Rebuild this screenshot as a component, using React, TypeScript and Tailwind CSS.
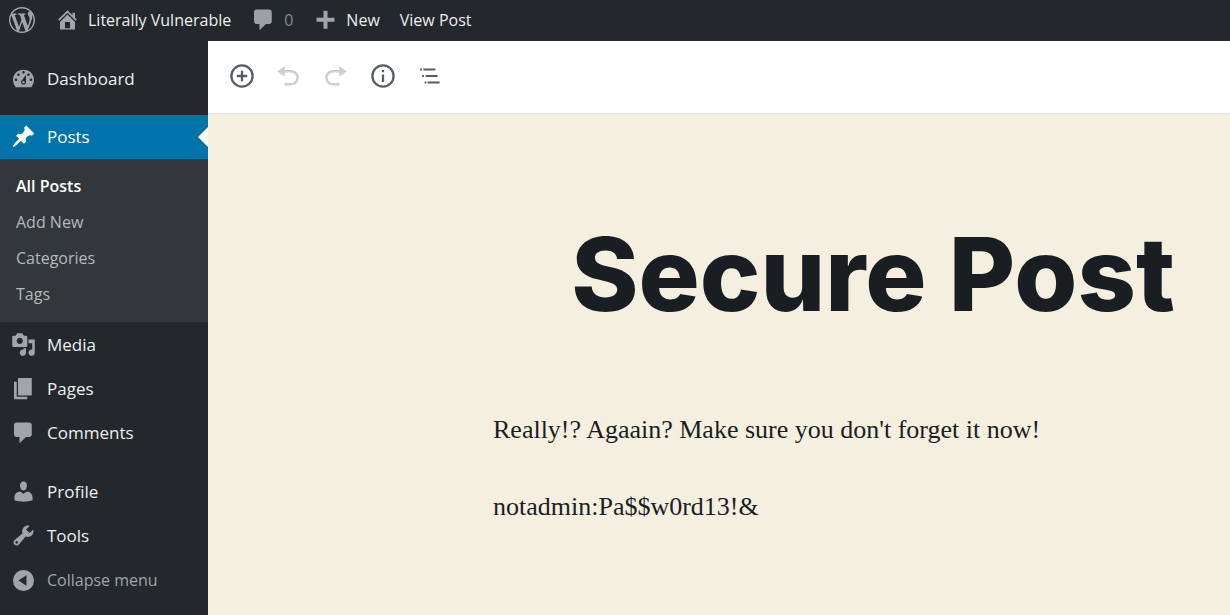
import type { ReactNode } from "react";

const dashicons = {
  wordpress:
    "M20 10c0-5.51-4.49-10-10-10C4.48 0 0 4.49 0 10c0 5.52 4.48 10 10 10 5.51 0 10-4.48 10-10zM7.78 15.37L4.37 6.22c.55-.02 1.17-.08 1.17-.08.5-.06.44-1.13-.06-1.11 0 0-1.45.11-2.37.11-.18 0-.37 0-.58-.01C4.12 2.69 6.87 1.11 10 1.11c2.33 0 4.45.87 6.05 2.34-.68-.11-1.65.39-1.65 1.58 0 .74.45 1.36.9 2.1.35.61.55 1.36.55 2.46 0 1.49-1.4 5-1.4 5l-3.03-8.37c.54-.02.82-.17.82-.17.5-.05.44-1.25-.06-1.22 0 0-1.44.12-2.38.12-.87 0-2.33-.12-2.33-.12-.5-.03-.56 1.2-.06 1.22l.92.08 1.26 3.41zM17.41 10c.24-.64.74-1.87.43-4.25.7 1.29 1.05 2.71 1.05 4.25 0 3.29-1.73 6.24-4.4 7.78.97-2.59 1.94-5.2 2.92-7.78zM6.1 18.09C3.12 16.65 1.11 13.53 1.11 10c0-1.3.23-2.48.72-3.59C3.25 10.3 4.67 14.2 6.1 18.09zm4.03-6.63l2.58 6.98c-.86.29-1.76.45-2.71.45-.79 0-1.57-.11-2.29-.33.81-2.38 1.62-4.74 2.42-7.1z",
  home: "M16 8.5l1.53 1.53-1.06 1.06L10 4.6l-6.47 6.49-1.06-1.06L10 2.5l4 4v-2h2v4zm-6-2.46l6 5.99V18H4v-5.97zM12 17v-5H8v5h4z",
  comments:
    "M4.4 2h10.2c1.1 0 2 .9 2 2v7.6c0 1.1-.9 2-2 2H12l-5.2 5v-5H4.4c-1.1 0-2-.9-2-2V4c0-1.1.9-2 2-2z",
  plus: "M17.2 8.6v3.2h-5.6v5.6H8.4v-5.6H2.8V8.6h5.6V3h3.2v5.6z",
  dashboard:
    "M3.76 17h12.48c1.34-1.63 2.14-3.7 2.14-5.96 0-4.9-3.75-8.04-8.38-8.04S1.62 6.14 1.62 11.04c0 2.26.8 4.33 2.14 5.96zM10 4c.55 0 1 .45 1 1s-.45 1-1 1-1-.45-1-1 .45-1 1-1zM6 6c.55 0 1 .45 1 1s-.45 1-1 1-1-.45-1-1 .45-1 1-1zm8 0c.55 0 1 .45 1 1s-.45 1-1 1-1-.45-1-1 .45-1 1-1zm-5.37 5.55L12 7v6c0 1.1-.9 2-2 2s-2-.9-2-2c0-.57.24-1.08.63-1.45zM4 10c.55 0 1 .45 1 1s-.45 1-1 1-1-.45-1-1 .45-1 1-1zm12 0c.55 0 1 .45 1 1s-.45 1-1 1-1-.45-1-1 .45-1 1-1zm-5 3c0-.55-.45-1-1-1s-1 .45-1 1 .45 1 1 1 1-.45 1-1z",
  post: "M10.44 3.02l1.82-1.82 6.36 6.35-1.83 1.82c-1.05-.68-2.48-.57-3.41.36l-.75.75c-.92.93-1.04 2.35-.35 3.41l-1.83 1.82-2.41-2.41-2.8 2.79c-.42.42-3.38 2.71-3.8 2.29s1.86-3.39 2.28-3.81l2.79-2.79L4.1 9.36l1.83-1.82c1.05.69 2.48.57 3.4-.36l.75-.75c.93-.92 1.05-2.35.36-3.41z",
  media:
    "M13 11V4c0-.55-.45-1-1-1h-1.67L9 1H5L3.67 3H2c-.55 0-1 .45-1 1v7c0 .55.45 1 1 1h10c.55 0 1-.45 1-1zM7 4.5c1.38 0 2.5 1.12 2.5 2.5S8.38 9.5 7 9.5 4.5 8.38 4.5 7 5.62 4.5 7 4.5zM14 6h5v10.5c0 1.38-1.12 2.5-2.5 2.5S14 17.88 14 16.5s1.12-2.5 2.5-2.5c.17 0 .34.02.5.05V9h-3V6zm-4 8.05V13h2v3.5c0 1.38-1.12 2.5-2.5 2.5S7 17.88 7 16.5 8.12 14 9.5 14c.17 0 .34.02.5.05z",
  page: "M5.6 1.6h11v14h-11zM2.4 4.6h2.2v12h8.4v2H2.4z",
  users:
    "M10 9.25c-2.27 0-2.73-3.44-2.73-3.44C7 4.02 7.82 2 9.97 2c2.16 0 2.98 2.02 2.71 3.81 0 0-.41 3.44-2.68 3.44zm0 2.57L12.72 10c2.39 0 4.52 2.33 4.52 4.53v2.49s-3.65 1.13-7.24 1.13c-3.65 0-7.24-1.13-7.24-1.13v-2.49c0-2.25 1.94-4.48 4.47-4.48z",
  tools:
    "M16.68 9.77c-1.34 1.34-3.3 1.67-4.95.99l-5.41 6.52c-.99.99-2.59.99-3.58 0s-.99-2.59 0-3.57l6.52-5.42c-.68-1.65-.35-3.61.99-4.95 1.28-1.28 3.12-1.62 4.72-1.06l-2.89 2.89 2.82 2.82 2.86-2.87c.53 1.58.18 3.39-1.08 4.65zM3.81 16.21c.4.39 1.04.39 1.43 0 .4-.4.4-1.04 0-1.43-.39-.4-1.03-.4-1.43 0-.39.39-.39 1.03 0 1.43z",
  collapse:
    "M10 1.6a8.4 8.4 0 1 0 0 16.8a8.4 8.4 0 0 0 0-16.8zM12.4 5.8v8.4L6 10z",
};

type IconName = keyof typeof dashicons;

function Icon({ name, className = "size-[25px]" }: { name: IconName; className?: string }) {
  return (
    <svg viewBox="0 0 20 20" fill="currentColor" fillRule="evenodd" aria-hidden="true" className={`shrink-0 ${className}`}>
      <path d={dashicons[name]} />
    </svg>
  );
}

function AdminBar() {
  return (
    <header className="flex h-[41px] items-center whitespace-nowrap bg-[#23282d] pb-[2px] pl-[9px] text-base text-[#eee]">
      <a href="#about" aria-label="About WordPress" className="text-[#a0a5aa]">
        <Icon name="wordpress" className="size-[26px]" />
      </a>
      <a href="#site" className="ml-5 flex items-center gap-2">
        <span className="text-[#a0a5aa]"><Icon name="home" /></span>
        Literally Vulnerable
      </a>
      <a href="#comments" aria-label="0 comments awaiting moderation" className="ml-5 flex items-center gap-2 text-[#9ca1a6]">
        <Icon name="comments" />
        <span className="text-[#82878c]">0</span>
      </a>
      <a href="#new" className="ml-5 flex items-center gap-2">
        <span className="text-[#a0a5aa]"><Icon name="plus" /></span>
        New
      </a>
      <a href="#view" className="ml-5">View Post</a>
    </header>
  );
}

function MenuItem({ icon, label, current = false }: { icon: IconName; label: string; current?: boolean }) {
  return (
    <a
      href={`#${label.toLowerCase()}`}
      aria-current={current ? "true" : undefined}
      className={`relative flex h-11 items-center gap-[11px] pl-[11px] ${current ? "bg-[#0073aa] text-white" : "text-[#eee]"}`}
    >
      <span className={`pb-[2px] ${current ? "text-white" : "text-[#a0a5aa]"}`}><Icon name={icon} /></span>
      {label}
      {current && (
        <span className="absolute right-0 top-3 border-y-10 border-r-10 border-y-transparent border-r-white" />
      )}
    </a>
  );
}

function Sidebar() {
  return (
    <nav aria-label="Main menu" className="w-52 shrink-0 bg-[#23282d] pt-4 text-[17px]">
      <MenuItem icon="dashboard" label="Dashboard" />
      <div className="h-[14px]" />
      <MenuItem icon="post" label="Posts" current />
      <ul className="mb-px bg-[#32373c] pt-[9px] pb-[10px] text-base text-[#b4b9be]">
        {["All Posts", "Add New", "Categories", "Tags"].map((label, i) => (
          <li key={label}>
            <a href="#posts" className={`flex h-9 items-center pl-4 ${i === 0 ? "font-semibold text-white" : ""}`}>
              {label}
            </a>
          </li>
        ))}
      </ul>
      <MenuItem icon="media" label="Media" />
      <MenuItem icon="page" label="Pages" />
      <MenuItem icon="comments" label="Comments" />
      <div className="h-[15px]" />
      <MenuItem icon="users" label="Profile" />
      <MenuItem icon="tools" label="Tools" />
      <button type="button" className="flex h-11 w-full items-center gap-[11px] pl-[11px] text-base text-[#a0a5aa]">
        <Icon name="collapse" />
        Collapse menu
      </button>
    </nav>
  );
}

function HistoryArrow({ className = "" }: { className?: string }) {
  return (
    <svg viewBox="0 0 25 25" aria-hidden="true" className={`size-[25px] ${className}`}>
      <path d="M1.2 7.4L8.6 2.2v10.4z" fill="currentColor" />
      <path d="M8 7.2h7.1a6.5 6.5 0 0 1 0 13H8.5" fill="none" stroke="currentColor" strokeWidth="2.4" />
    </svg>
  );
}

function ToolButton({ label, disabled = false, children }: { label: string; disabled?: boolean; children: ReactNode }) {
  return (
    <button
      type="button"
      aria-label={label}
      disabled={disabled}
      className="flex h-11 w-[47px] items-center justify-center text-[#555d66] disabled:text-[#ccced1]"
    >
      {children}
    </button>
  );
}

function Toolbar() {
  return (
    <div role="toolbar" aria-label="Document tools" className="flex h-[73px] items-center border-b border-[#e2e4e7] bg-white pb-[2px] pl-[10px]">
      <ToolButton label="Add block">
        <svg viewBox="0 0 24 24" className="size-6" fill="none" stroke="currentColor" strokeWidth="2.3">
          <circle cx="12" cy="12" r="10.6" />
          <path d="M12 6.8v10.4M6.8 12h10.4" />
        </svg>
      </ToolButton>
      <ToolButton label="Undo" disabled><HistoryArrow /></ToolButton>
      <ToolButton label="Redo" disabled><HistoryArrow className="-scale-x-100" /></ToolButton>
      <ToolButton label="Content structure">
        <svg viewBox="0 0 24 24" className="size-6" fill="none" stroke="currentColor" strokeWidth="2.3">
          <circle cx="12" cy="12" r="10.6" />
          <path d="M12 10.6v7.4M12 6v2.3" />
        </svg>
      </ToolButton>
      <ToolButton label="Block navigation">
        <svg viewBox="0 0 24 24" className="size-6" fill="none" stroke="currentColor" strokeWidth="2">
          <path d="M2.2 5.5h1.8M5.4 5.5h12M4.2 12h1.8M7.6 12h12M6.6 18.5h1.8M9.6 18.5h12" />
        </svg>
      </ToolButton>
    </div>
  );
}

export default function App() {
  return (
    <div className="flex min-h-screen flex-col bg-[#f5efe0] font-['Open_Sans','Noto_Sans',sans-serif]">
      <AdminBar />
      <div className="flex flex-1">
        <Sidebar />
        <main className="min-w-0 flex-1 overflow-hidden">
          <Toolbar />
          <article className="ml-[285px] min-w-[760px] pt-24 text-[#191e23]">
            <h1 className="text-center font-['Inter',sans-serif] text-[102px] leading-[128px] font-extrabold">Secure Post</h1>
            <div className="mt-[72px] flex flex-col gap-[37px] font-['Liberation_Serif',serif] text-[26px] leading-10">
              <p>Really!? Agaain? Make sure you don't forget it now!</p>
              <p>notadmin:Pa$$w0rd13!&amp;</p>
            </div>
          </article>
        </main>
      </div>
    </div>
  );
}
